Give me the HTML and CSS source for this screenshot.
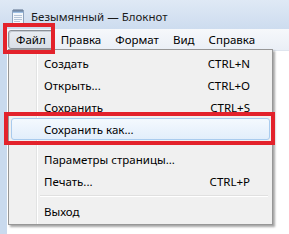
FILE: index.html
```html
<!DOCTYPE html>
<html>
<head>
<meta charset="UTF-8">
<title>Безымянный — Блокнот</title>
<link rel="stylesheet" href="styles.css">
</head>
<body>

<div class="window">

  <div class="titlebar">
    <svg class="appIcon" width="12" height="16" viewBox="0 0 12 16">
      <rect x="0.5" y="2.5" width="11" height="13" fill="#f4f8fc" stroke="#8ea3bd"/>
      <rect x="1" y="3" width="10" height="2" fill="#9fc0e4"/>
      <path d="M2 1v3M4 1v3M6 1v3M8 1v3M10 1v3" stroke="#5a6f8a" stroke-width="1"/>
      <path d="M2 7.5h8M2 9.5h8M2 11.5h8M2 13.5h6" stroke="#b4c4d8" stroke-width="1"/>
    </svg>
    <span class="caption">Безымянный — Блокнот</span>
  </div>

  <div class="menubar">
    <div class="menuItem pressed">Файл</div>
    <div class="menuItem">Правка</div>
    <div class="menuItem">Формат</div>
    <div class="menuItem">Вид</div>
    <div class="menuItem">Справка</div>
  </div>

  <div class="editor"></div>

  <div class="dropdown">
    <div class="row"><span>Создать</span><span class="key">CTRL+N</span></div>
    <div class="row"><span>Открыть...</span><span class="key">CTRL+O</span></div>
    <div class="row"><span>Сохранить</span><span class="key">CTRL+S</span></div>
    <div class="row hover"><span>Сохранить как...</span></div>
    <div class="sep"></div>
    <div class="row"><span>Параметры страницы...</span></div>
    <div class="row"><span>Печать...</span><span class="key">CTRL+P</span></div>
    <div class="sep"></div>
    <div class="row"><span>Выход</span></div>
  </div>

  <div class="mark markFile"></div>
  <div class="mark markSaveAs"></div>

</div>

</body>
</html>
```

FILE: styles.css
```css
body{
  margin:0;
  width:289px;
  height:234px;
  overflow:hidden;
  font-family:"Noto Sans","Open Sans",sans-serif;
  font-size:11.5px;
  color:#000;
}

.window{
  position:relative;
  height:234px;
  display:flex;
  flex-direction:column;
  background:#c9daee;
}

.titlebar{
  height:29px;
  display:flex;
  align-items:center;
  padding:3px 0 0 12px;
  box-sizing:border-box;
  background:linear-gradient(#dfe9f5,#cddcef);
}

.appIcon{
  margin-right:7px;
}

.caption{
  color:#1b1b1b;
}

.menubar{
  height:21px;
  margin-left:7px;
  display:flex;
  align-items:center;
  padding-left:1px;
  background:linear-gradient(#f6f8fb,#eaeff6);
  border-bottom:1px solid #dfe5ee;
}

.menuItem{
  padding:0 6px;
  height:19px;
  line-height:18px;
  box-sizing:border-box;
  border:1px solid transparent;
}

.pressed{
  padding:0 7px;
  border-color:#8b9097;
  border-radius:3px;
  background:linear-gradient(#e9edf2,#d9dfe7);
  box-shadow:inset 1px 1px 0 #c5cbd3;
}

.editor{
  flex:1;
  margin-left:7px;
  background:#fff;
}

.dropdown{
  position:absolute;
  left:8px;
  top:49px;
  width:265px;
  padding:2px;
  box-sizing:border-box;
  background:#f0f0f0;
  border:1px solid #979797;
  box-shadow:2px 2px 2px rgba(0,0,0,0.35);
  background-image:linear-gradient(90deg,transparent 27px,#e2e3e3 27px,#e2e3e3 28px,#fff 28px,#fff 29px,transparent 29px);
}

.row{
  height:22px;
  display:flex;
  align-items:center;
  justify-content:space-between;
  padding:0 19px 0 32px;
  border:1px solid transparent;
  box-sizing:border-box;
}

.hover{
  border-color:#a9cbee;
  border-radius:3px;
  background:linear-gradient(#f4f9fe,#e2eefb);
}

.sep{
  height:8px;
  margin-left:29px;
  margin-right:2px;
  background:linear-gradient(transparent 3px,#e0e0e0 3px,#e0e0e0 4px,#fff 4px,#fff 5px,transparent 5px);
}

.mark{
  position:absolute;
  border:4px solid #e3222b;
}

.markFile{
  left:3px;
  top:23px;
  width:44px;
  height:23px;
}

.markSaveAs{
  left:4px;
  top:112px;
  width:263px;
  height:25px;
}
```
